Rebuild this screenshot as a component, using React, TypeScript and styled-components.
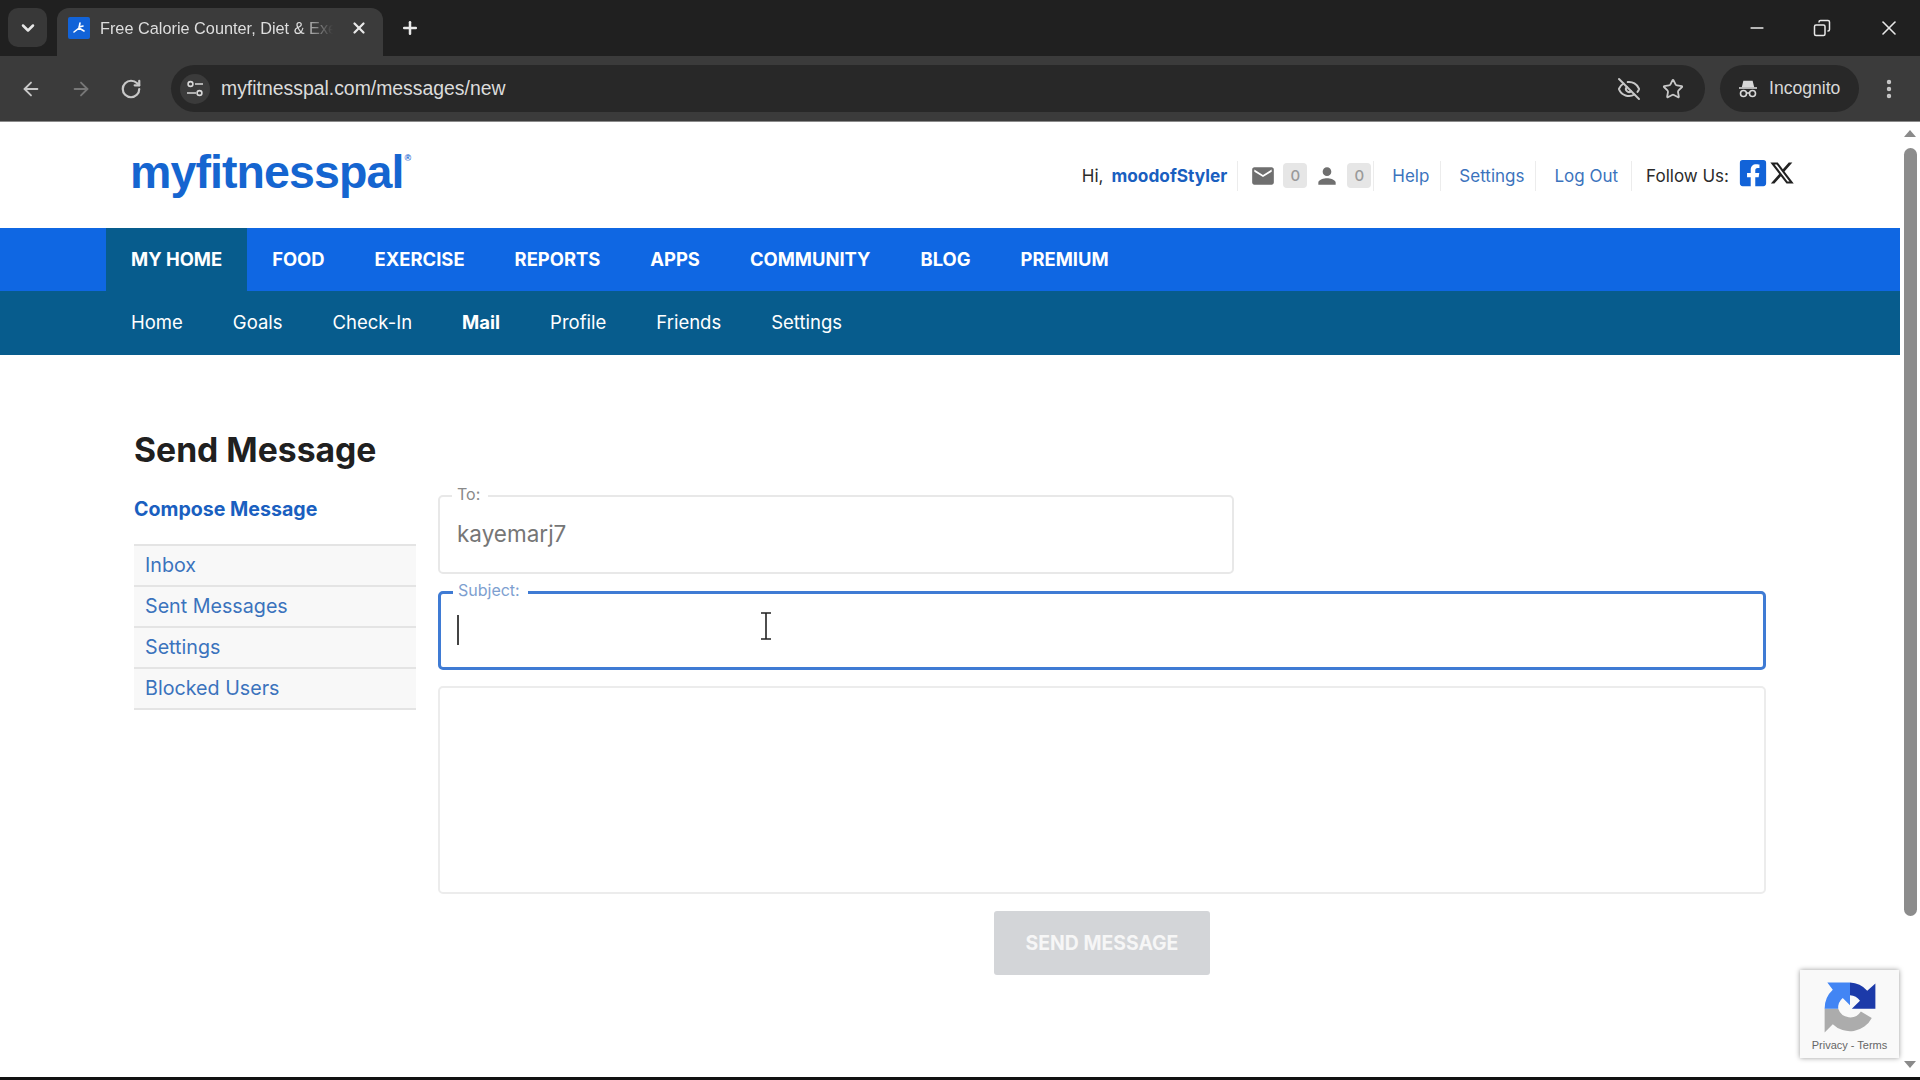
import styled, { createGlobalStyle } from "styled-components";
import { ArrowLeft, ArrowRight, ChevronDown, Copy, EllipsisVertical, EyeOff, Minus, Plus, RotateCw, Star, X } from "lucide-react";
import { MdEmail, MdPerson } from "react-icons/md";
import { FaFacebookSquare } from "react-icons/fa";

const GlobalStyle = createGlobalStyle`
  html, body {
    margin: 0;
    padding: 0;
    background: #fff;
    overflow: hidden;
  }
  * {
    box-sizing: border-box;
  }
`;

const Page = styled.div`
  width: 1920px;
  height: 1080px;
  display: flex;
  flex-direction: column;
  font-family: Inter, "Liberation Sans", sans-serif;
  overflow: hidden;
`;

/* browser chrome */
const TabStrip = styled.div`
  height: 56px;
  background: #202020;
  display: flex;
  align-items: flex-end;
  padding-left: 8px;
  color: #e8e8e8;
  flex: none;
`;

const TabSearch = styled.div`
  width: 39px;
  height: 39px;
  margin-bottom: 9px;
  background: #383838;
  border-radius: 10px;
  display: flex;
  align-items: center;
  justify-content: center;
`;

const Tab = styled.div`
  width: 326px;
  height: 48px;
  margin-left: 10px;
  background: #3b3b3b;
  border-radius: 12px 12px 0 0;
  display: flex;
  align-items: center;
  padding: 0 15px 8px 11px;
  font-family: "Liberation Sans", sans-serif;
  font-size: 16.3px;
`;

const Favicon = styled.div`
  width: 22px;
  height: 22px;
  background: #1263d8;
  border-radius: 2px;
  margin-right: 10px;
  display: flex;
  align-items: center;
  justify-content: center;
  flex: none;
`;

const TabTitle = styled.span`
  flex: 1;
  white-space: nowrap;
  overflow: hidden;
  color: #dedede;
  -webkit-mask-image: linear-gradient(to right, #000 84%, transparent 98%);
  mask-image: linear-gradient(to right, #000 84%, transparent 98%);
`;

const NewTab = styled.div`
  margin: 0 0 13px 17px;
  height: 30px;
  display: flex;
  align-items: center;
`;

const WindowControls = styled.div`
  margin-left: auto;
  display: flex;
  height: 56px;
  align-items: center;
  gap: 46px;
  padding-right: 19px;
`;

const Toolbar = styled.div`
  height: 66px;
  background: #3b3b3b;
  border-bottom: 1px solid #8a8a8a;
  display: flex;
  align-items: center;
  padding: 0 0 0 20px;
  flex: none;
  color: #c8c8c8;
`;

const NavIcons = styled.div`
  display: flex;
  align-items: center;
  gap: 28px;
  width: 151px;
`;

const Omnibox = styled.div`
  width: 1534px;
  height: 47px;
  background: #282828;
  border-radius: 24px;
  display: flex;
  align-items: center;
  padding: 0 21px 0 9px;
  font-family: "Liberation Sans", sans-serif;
`;

const TuneButton = styled.div`
  width: 30px;
  height: 30px;
  border-radius: 50%;
  background: #3b3b3b;
  display: flex;
  align-items: center;
  justify-content: center;
  margin-right: 11px;
`;

const Url = styled.span`
  flex: 1;
  font-size: 19.4px;
  color: #dcdcdc;
`;

const OmniIcons = styled.div`
  display: flex;
  align-items: center;
  gap: 21px;
`;

const IncognitoPill = styled.div`
  width: 139px;
  height: 47px;
  margin-left: 15px;
  background: #282828;
  border-radius: 24px;
  display: flex;
  align-items: center;
  gap: 11px;
  padding-left: 18px;
  font-family: "Liberation Sans", sans-serif;
  font-size: 17.6px;
  color: #d8d8d8;
`;

const MenuDots = styled.div`
  margin-left: 18px;
  display: flex;
`;

/* site */
const Viewport = styled.div`
  flex: 1;
  display: flex;
  position: relative;
  min-height: 0;
`;

const Site = styled.div`
  flex: 1;
  background: #fff;
  min-width: 0;
`;

const Header = styled.header`
  height: 106px;
  display: flex;
  align-items: center;
  padding: 0 105px 0 130px;
`;

const Logo = styled.div`
  font-family: "Liberation Sans", sans-serif;
  font-weight: 700;
  font-size: 46.5px;
  letter-spacing: -0.9px;
  color: #1565d0;
  line-height: 1;
  display: flex;
  align-items: flex-start;
  margin-top: -6px;

  sup {
    font-size: 9px;
    line-height: 1;
    margin: 5px 0 0 1px;
    letter-spacing: 0;
  }
`;

const UserBar = styled.div`
  margin-left: auto;
  display: flex;
  align-items: center;
  font-size: 17px;
  color: #2b2b2b;
  margin-top: 1px;
`;

const Strong = styled.a`
  color: #1a5fc0;
  font-weight: 700;
  margin-left: 8px;
  font-size: 17.3px;
`;

const IconGroup = styled.div`
  display: flex;
  align-items: center;
  gap: 7px;
  margin: 0 2px 0 10px;
  padding-left: 12px;
  border-left: 1px solid #ececec;
  color: #6f6f6f;
  height: 30px;
`;

const CountBadge = styled.span`
  width: 24px;
  height: 25px;
  border-radius: 4px;
  background: #e6e6e6;
  color: #9a9a9a;
  font-size: 15px;
  font-weight: 500;
  display: flex;
  align-items: center;
  justify-content: center;
`;

const TopLink = styled.a`
  color: #3b73bd;
  padding: 0 11px 0 18px;
  border-left: 1px solid #ececec;
  height: 30px;
  display: flex;
  align-items: center;
`;

const FollowUs = styled.div`
  display: flex;
  align-items: center;
  height: 30px;
  padding-left: 14px;
  border-left: 1px solid #ececec;
  margin-left: 2px;
`;

const SocialIcons = styled.div`
  display: flex;
  align-items: center;
  gap: 1px;
  margin: -5px 0 0 9px;
  color: #1263d8;
`;

const MainNav = styled.nav`
  height: 63px;
  background: #0f67e3;
  padding-left: 106px;
  display: flex;
`;

const MainNavItem = styled.a<{ $active?: boolean }>`
  padding: 0 25px 2px;
  display: flex;
  align-items: center;
  color: #fff;
  font-size: 18.4px;
  font-weight: 700;
  background: ${(p) => (p.$active ? "#075c8d" : "transparent")};
`;

const SubNav = styled.nav`
  height: 64px;
  background: #075c8d;
  padding-left: 106px;
  display: flex;
`;

const SubNavItem = styled.a<{ $active?: boolean }>`
  padding: 0 25px 2px;
  display: flex;
  align-items: center;
  color: #fff;
  font-size: 18.5px;
  font-weight: ${(p) => (p.$active ? 700 : 400)};
`;

const Main = styled.main`
  padding: 72px 134px 0;
`;

const Title = styled.h1`
  margin: 0 0 23px;
  font-size: 33.7px;
  line-height: 46px;
  font-weight: 700;
  color: #202020;
`;

const Columns = styled.div`
  display: flex;
  gap: 22px;
`;

const Sidebar = styled.aside`
  width: 282px;
  flex: none;
`;

const Compose = styled.a`
  display: block;
  font-size: 19.6px;
  font-weight: 700;
  line-height: 26px;
  color: #1a5fc0;
  margin-bottom: 22px;
`;

const SideList = styled.ul`
  list-style: none;
  margin: 0;
  padding: 0;
  border-top: 2px solid #e4e4e4;
`;

const SideItem = styled.li`
  height: 41px;
  display: flex;
  align-items: center;
  padding: 0 0 2px 11px;
  background: #f8f8f8;
  border-bottom: 2px solid #e4e4e4;
  color: #3b73bd;
  font-size: 19.7px;
`;

const Form = styled.form`
  flex: 1;
  display: flex;
  flex-direction: column;
  margin-top: -9px;
`;

const Field = styled.fieldset<{ $width?: number; $focused?: boolean }>`
  margin: 0 0 9px;
  width: ${(p) => (p.$width ? `${p.$width}px` : "100%")};
  height: 87px;
  padding: 0 17px;
  border: ${(p) => (p.$focused ? "3px solid #3f7bd4" : "2px solid #e8e8e8")};
  border-radius: 5px;
  position: relative;
`;

const FieldLabel = styled.legend<{ $focused?: boolean }>`
  font-size: 16px;
  line-height: 18px;
  padding: 0 8px 0 5px;
  margin-left: -5px;
  position: relative;
  top: -2px;
  color: ${(p) => (p.$focused ? "#7e9fd0" : "#8a8a8a")};
`;

const FieldBody = styled.div`
  height: 57px;
  display: flex;
  align-items: center;
`;

const FieldValue = styled.span`
  font-size: 22.5px;
  color: #767676;
`;

const Caret = styled.span`
  width: 1.5px;
  height: 30px;
  background: #444;
  margin-left: -1px;
`;

const IBeam = styled.svg`
  position: absolute;
  left: 318px;
  top: 11px;
`;

const MessageBox = styled.div`
  height: 208px;
  margin-top: 7px;
  border: 2px solid #ececec;
  border-radius: 5px;
`;

const SendButton = styled.button`
  align-self: center;
  width: 216px;
  height: 64px;
  margin-top: 17px;
  border: 0;
  border-radius: 3px;
  background: #d3d5d8;
  color: #f6f6f6;
  font-family: inherit;
  font-size: 19.4px;
  font-weight: 700;
`;

const Recaptcha = styled.div`
  position: absolute;
  right: 21px;
  bottom: 19px;
  width: 99px;
  height: 88px;
  background: #f9f9f9;
  box-shadow: 0 0 5px #9a9a9a;
  display: flex;
  flex-direction: column;
  align-items: center;
  padding-top: 8px;
  font-family: "Liberation Sans", sans-serif;
  font-size: 11px;
  color: #666;
  gap: 3px;
`;

const Scrollbar = styled.div`
  width: 20px;
  background: #fff;
  display: flex;
  flex-direction: column;
  align-items: center;
  padding-top: 8px;
  flex: none;
`;

const ScrollArrow = styled.div<{ $down?: boolean }>`
  width: 0;
  height: 0;
  border-left: 6px solid transparent;
  border-right: 6px solid transparent;
  ${(p) => (p.$down ? "border-top: 7px solid #8a8a8a; margin-top: auto; margin-bottom: 9px;" : "border-bottom: 7px solid #8a8a8a;")}
`;

const ScrollThumb = styled.div`
  width: 13px;
  height: 768px;
  margin-top: 11px;
  background: #8c8c8c;
  border-radius: 7px;
`;

const BottomEdge = styled.div`
  height: 3px;
  background: #111;
  flex: none;
`;

const mainNav = ["MY HOME", "FOOD", "EXERCISE", "REPORTS", "APPS", "COMMUNITY", "BLOG", "PREMIUM"];
const subNav = ["Home", "Goals", "Check-In", "Mail", "Profile", "Friends", "Settings"];
const sideItems = ["Inbox", "Sent Messages", "Settings", "Blocked Users"];

const TuneIcon = () => (
  <svg width="20" height="20" viewBox="0 0 20 20" fill="none" stroke="#d8d8d8" strokeWidth="1.6">
    <circle cx="5.5" cy="5" r="2.4" />
    <path d="M10 5h8M2 14h9" />
    <circle cx="14.5" cy="14" r="2.4" />
  </svg>
);

const IncognitoIcon = () => (
  <svg width="20" height="20" viewBox="0 0 20 20" fill="none" stroke="#d8d8d8" strokeWidth="1.6">
    <path d="M6 2.5h8l1.2 5H4.8z" fill="#d8d8d8" />
    <path d="M1 9h18" />
    <circle cx="5.5" cy="14.5" r="3" />
    <circle cx="14.5" cy="14.5" r="3" />
    <path d="M8.5 14h3" />
  </svg>
);

const RunnerIcon = () => (
  <svg width="14" height="14" viewBox="0 0 14 14" fill="none" stroke="#fff" strokeWidth="1.6" strokeLinecap="round">
    <path d="M8 2L7 7L2 11M7 7l5 3M7 6l4-1" />
  </svg>
);

const XLogo = () => (
  <svg width="26" height="26" viewBox="0 0 24 24" fill="#222">
    <path d="M18.244 2.25h3.308l-7.227 8.26 8.502 11.24H16.17l-5.214-6.817L4.99 21.75H1.68l7.73-8.835L1.254 2.25H8.08l4.713 6.231zm-1.161 17.52h1.833L7.084 4.126H5.117z" />
  </svg>
);

const RecaptchaLogo = () => (
  <svg width="58" height="58" viewBox="0 0 64 64">
    <path d="M4 34V60l9-9A27 27 0 0 0 56 44L44 37A14 14 0 0 1 19 34Z" fill="#acacac" />
    <path d="M4 34A28 28 0 0 1 13 13L7 5H32V30L24 22A14 14 0 0 0 19 34Z" fill="#4285f4" />
    <path d="M32 5A27 27 0 0 1 51 14L60 6V34H34L43 25A14 14 0 0 0 32 19Z" fill="#1c3aa9" />
  </svg>
);

export default function App() {
  return (
    <Page>
      <GlobalStyle />
      <TabStrip>
        <TabSearch>
          <ChevronDown size={20} strokeWidth={3} />
        </TabSearch>
        <Tab>
          <Favicon>
            <RunnerIcon />
          </Favicon>
          <TabTitle>Free Calorie Counter, Diet &amp; Exercise</TabTitle>
          <X size={18} strokeWidth={3} style={{ marginLeft: 12 }} />
        </Tab>
        <NewTab>
          <Plus size={20} strokeWidth={3} />
        </NewTab>
        <WindowControls>
          <Minus size={20} />
          <Copy size={18} style={{ transform: "scaleX(-1)" }} />
          <X size={24} strokeWidth={1.6} />
        </WindowControls>
      </TabStrip>
      <Toolbar>
        <NavIcons>
          <ArrowLeft size={22} />
          <ArrowRight size={22} color="#777" />
          <RotateCw size={22} strokeWidth={2.4} />
        </NavIcons>
        <Omnibox>
          <TuneButton>
            <TuneIcon />
          </TuneButton>
          <Url>myfitnesspal.com/messages/new</Url>
          <OmniIcons>
            <EyeOff size={24} />
            <Star size={22} />
          </OmniIcons>
        </Omnibox>
        <IncognitoPill>
          <IncognitoIcon />
          Incognito
        </IncognitoPill>
        <MenuDots>
          <EllipsisVertical size={24} strokeWidth={2.4} />
        </MenuDots>
      </Toolbar>
      <Viewport>
        <Site>
          <Header>
            <Logo>
              myfitnesspal<sup>®</sup>
            </Logo>
            <UserBar>
              Hi, <Strong>moodofStyler</Strong>
              <IconGroup>
                <MdEmail size={26} />
                <CountBadge>0</CountBadge>
                <MdPerson size={26} />
                <CountBadge>0</CountBadge>
              </IconGroup>
              <TopLink>Help</TopLink>
              <TopLink>Settings</TopLink>
              <TopLink>Log Out</TopLink>
              <FollowUs>
                Follow Us:
                <SocialIcons>
                  <FaFacebookSquare size={30} />
                  <XLogo />
                </SocialIcons>
              </FollowUs>
            </UserBar>
          </Header>
          <MainNav>
            {mainNav.map((item, i) => (
              <MainNavItem key={item} $active={i === 0}>
                {item}
              </MainNavItem>
            ))}
          </MainNav>
          <SubNav>
            {subNav.map((item) => (
              <SubNavItem key={item} $active={item === "Mail"}>
                {item}
              </SubNavItem>
            ))}
          </SubNav>
          <Main>
            <Title>Send Message</Title>
            <Columns>
              <Sidebar>
                <Compose>Compose Message</Compose>
                <SideList>
                  {sideItems.map((item) => (
                    <SideItem key={item}>{item}</SideItem>
                  ))}
                </SideList>
              </Sidebar>
              <Form>
                <Field $width={796}>
                  <FieldLabel>To:</FieldLabel>
                  <FieldBody>
                    <FieldValue>kayemarj7</FieldValue>
                  </FieldBody>
                </Field>
                <Field $focused>
                  <FieldLabel $focused>Subject:</FieldLabel>
                  <FieldBody>
                    <Caret />
                  </FieldBody>
                  <IBeam width="14" height="28" viewBox="0 0 14 28" fill="none" stroke="#222" strokeWidth="1.6">
                    <path d="M2 1h10M2 27h10M7 1v26" />
                  </IBeam>
                </Field>
                <MessageBox />
                <SendButton type="button">SEND MESSAGE</SendButton>
              </Form>
            </Columns>
          </Main>
        </Site>
        <Scrollbar>
          <ScrollArrow />
          <ScrollThumb />
          <ScrollArrow $down />
        </Scrollbar>
        <Recaptcha>
          <RecaptchaLogo />
          <span>Privacy - Terms</span>
        </Recaptcha>
      </Viewport>
      <BottomEdge />
    </Page>
  );
}
